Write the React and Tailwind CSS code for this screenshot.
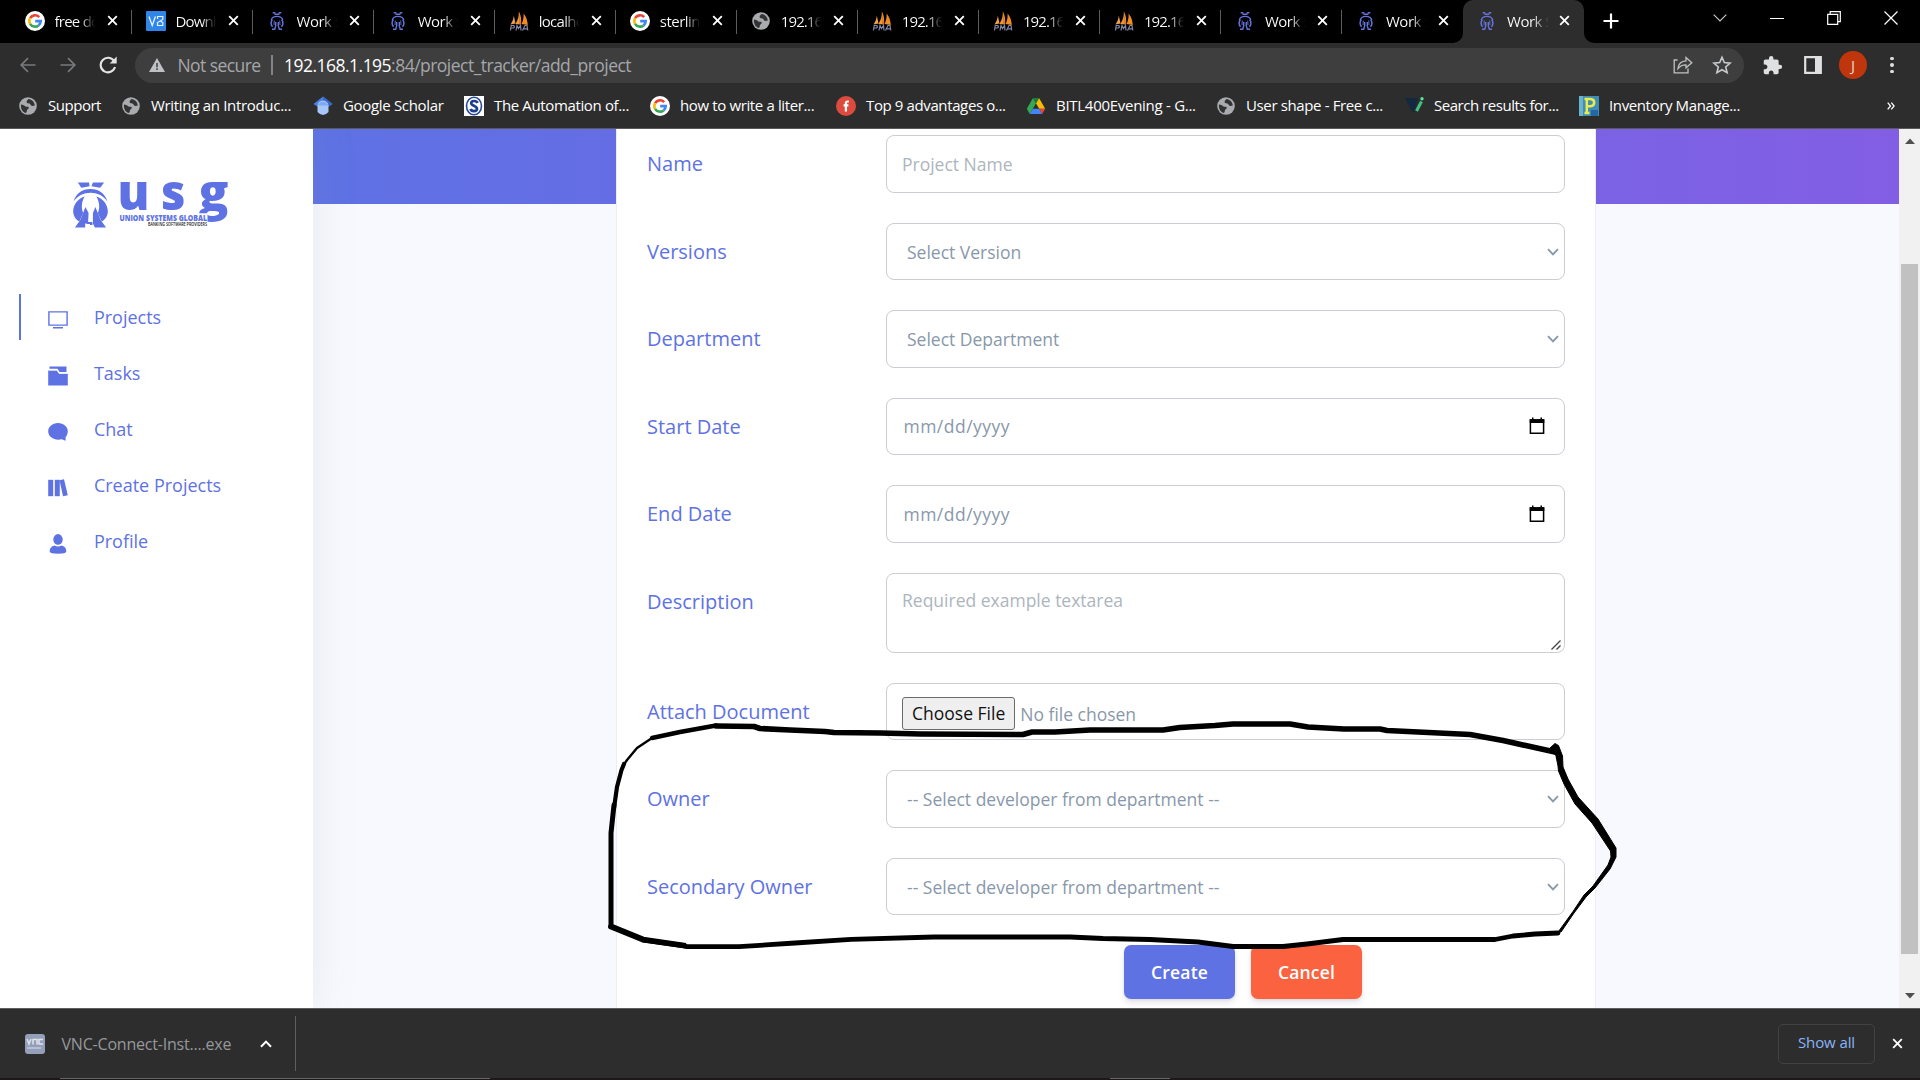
import React from "react";

/* ---------- logos and favicons ---------- */

function Figure({ className }) {
  return (
    <svg viewBox="0 0 36 46" className={className} fill="currentColor" preserveAspectRatio="none">
      <path d="M5 0.5H16.5L17 4.2L8.5 5.8Z" />
      <path d="M20.5 0.5H32L28 5.8L19 4.2Z" />
      <path d="M0.500 19.5C3 11.500 9.5 7 18 7S33 11.500 35.500 19.500C30.500 13.500 25 10.800 18 10.800S5.500 13.500 0.500 19.500Z" />
      <path d="M12 14.500C3 17 -1 26 0.500 32C1.500 35.500 3.500 38 6.500 39.500L10.500 31C8 26 9 19 12 14.500Z" />
      <path d="M24 14.500C33 17 37 26 35.500 32C34.500 35.500 32.500 38 29.500 39.500L25.500 31C28 26 27 19 24 14.500Z" />
      <path d="M12.800 25L16 31L15.500 41.500H12.500V45.500H2L7.500 38Z" />
      <path d="M23 25L20.500 31V41.500L22.500 45.500H34L28.500 38Z" />
      <path d="M14 40H20V43H17.500V42H14Z" />
    </svg>
  );
}

function WorkIcon() {
  return (
    <svg viewBox="0 0 20 20" className="size-5 shrink-0" fill="none" stroke="#6474dd">
      <path d="M5.700 1.700H8.300M11.700 1.700H14.300M7.500 3.300H12.500" strokeWidth="1.400" />
      <path d="M4.200 9C5 6.500 7.200 5.300 10 5.300S15 6.500 15.800 9" strokeWidth="1.300" />
      <path d="M5.300 8.500C3.500 11 3.800 14.200 5.600 15.600M14.700 8.500C16.500 11 16.200 14.200 14.400 15.600" strokeWidth="1.500" />
      <path d="M8.700 11V15L7.700 18.200H5M11.300 11V15L12.300 18.200H15" strokeWidth="1.400" />
      <path d="M7.300 9.500L7 14M12.700 9.500L13 14" strokeWidth="0.900" />
    </svg>
  );
}

function GoogleIcon() {
  return (
    <svg viewBox="0 0 20 20" className="size-5 shrink-0">
      <circle cx="10" cy="10" r="10" fill="#fff" />
      <g fill="none" strokeWidth="2.600">
        <path d="M14.200 6.100A5.700 5.700 0 0 0 5.100 7.200" stroke="#ea4335" />
        <path d="M5.100 7.200A5.700 5.700 0 0 0 5.100 12.800" stroke="#fbbc05" />
        <path d="M5.100 12.800A5.700 5.700 0 0 0 13.600 14.400" stroke="#34a853" />
        <path d="M13.600 14.400A5.700 5.700 0 0 0 15.700 10.100H10.200" stroke="#4285f4" />
      </g>
    </svg>
  );
}

function DownloadSiteIcon() {
  return (
    <svg viewBox="0 0 20 20" className="size-5 shrink-0">
      <rect width="20" height="20" rx="1" fill="#2f86e8" />
      <path d="M3 5.500L6.200 14.500L9.400 5.500" fill="none" stroke="#e6f1ff" strokeWidth="1.300" />
      <path d="M11.500 8V5.500H16.800V8.500L11.500 11.500V14.500H16.800V11.500L14.500 10" fill="none" stroke="#e6f1ff" strokeWidth="1.200" />
    </svg>
  );
}

function PmaIcon() {
  return (
    <svg viewBox="0 0 20 20" className="size-5 shrink-0">
      <path d="M1.500 13.500C3.500 10.500 4.500 8 4.800 4.500L6.500 12.500Z" fill="#f0a04a" />
      <path d="M6.300 13C9 9 10 5 9.900 0.500C12 4.500 12.600 9 12 13.500Z" fill="#f5962c" />
      <path d="M9.900 0.500L10.300 13H12Z" fill="#c9772a" />
      <path d="M12.500 13C14.500 9 14.800 6 14.600 2.500C17.500 6 18.500 10 18.800 14Z" fill="#f28c1e" />
      <g fill="none" stroke="#8488a8" strokeWidth="1.200">
        <path d="M1.500 19.500L2.200 14.500H4.500Q6.300 15.800 4.500 17H2" />
        <path d="M7 19.500L8 14.500L9.500 17.500L11.500 14.500L12 19.500" />
        <path d="M13.500 19.500L16 14.500H18L18.800 19.500M14.500 17.800H18.200" />
      </g>
    </svg>
  );
}

function GlobeIcon() {
  return (
    <svg viewBox="0 0 20 20" className="size-5 shrink-0">
      <circle cx="10" cy="10" r="8.800" fill="#a9abae" />
      <path d="M3 8.500C5 8.500 6.500 9.500 7.500 10.500C9 11 10.500 10 10.800 11.500C11 13 8.500 13.500 8.800 15C8.800 16 8 17 7.500 17C4.500 16 2.500 12.500 3 8.500Z" fill="#333" />
      <path d="M10.500 3C9 4.500 8 5.500 9 7C10.500 7.500 12 7 12.500 8.500C12.800 10 14.500 10.200 16.800 9.500C16.500 6 13.800 3.300 10.500 3Z" fill="#333" />
    </svg>
  );
}

function ScholarIcon() {
  return (
    <svg viewBox="0 0 20 20" className="size-5 shrink-0">
      <path d="M10 0.500L19.500 8L10 14L0.500 8Z" fill="#4c80e0" />
      <path d="M10 0.500L19.500 8L10 14Z" fill="#3969c7" />
      <path d="M4.500 10A5.500 5.500 0 0 1 15.500 10V16Q10 22 4.500 16Z" fill="#a8c6fa" />
      <path d="M4.800 9.500A5.500 5.500 0 0 1 15.200 9.500Z" fill="#7fa9f2" />
    </svg>
  );
}

function AutomationIcon() {
  return (
    <svg viewBox="0 0 20 20" className="size-5 shrink-0">
      <rect width="20" height="20" fill="#fff" />
      <ellipse cx="10" cy="10" rx="7.500" ry="8.800" fill="none" stroke="#274a94" strokeWidth="1.600" />
      <path d="M13.500 7C12.500 4.300 7.200 4.300 7.200 7.300C7.200 10 13 9.500 13 12.700C13 15.900 7.300 15.700 6.500 13" fill="none" stroke="#1f3f8c" strokeWidth="2.700" />
    </svg>
  );
}

function RedFIcon() {
  return (
    <svg viewBox="0 0 20 20" className="size-5 shrink-0">
      <circle cx="10" cy="10" r="10" fill="#dd4b3f" />
      <path d="M12.800 5.500H11.600Q9.900 5.500 9.900 7.300V15.500M7.600 9.300H12.400" fill="none" stroke="#fff" strokeWidth="2.200" />
    </svg>
  );
}

function DriveIcon() {
  return (
    <svg viewBox="0 0 20 20" className="size-5 shrink-0">
      <path d="M7 2L10 7.200L3.800 18L0.800 12.800Z" fill="#34a853" />
      <path d="M10 7.200L13 2L19.200 12.800H13.200Z" fill="#fbbc05" />
      <path d="M7 2H13L10 7.200Z" fill="#188038" />
      <path d="M6.800 12.800H13.200L16.200 18H3.800Z" fill="#4285f4" />
      <path d="M13.200 12.800H19.200L16.200 18Z" fill="#ea4335" />
    </svg>
  );
}

function SearchResultsIcon() {
  return (
    <svg viewBox="0 0 20 20" className="size-5 shrink-0">
      <path d="M0.500 2H14L9.500 17.500Z" fill="#14283f" />
      <path d="M17.500 5.500L12.500 15" stroke="#3fc27d" strokeWidth="3" />
      <circle cx="18" cy="2.700" r="1.700" fill="#56e39a" />
    </svg>
  );
}

function InventoryIcon() {
  return (
    <svg viewBox="0 0 20 20" className="size-5 shrink-0">
      <rect width="20" height="20" fill="#3f8db5" />
      <path d="M0 0H4V20H0Z" fill="#69b3cf" />
      <path d="M12 14H19V20H12Z" fill="#2566a4" />
      <path d="M7.800 17V3H11.500Q15.200 3.200 15.200 6.500T11.500 10.200H8M5.500 3H9M5.500 17H10.500" fill="none" stroke="#e9ec4e" strokeWidth="2.500" />
    </svg>
  );
}

function CloseX({ className }) {
  return (
    <svg viewBox="0 0 12 12" className={className} stroke="#fff" strokeWidth="2">
      <path d="M1.300 1.300L10.700 10.700M10.700 1.300L1.300 10.700" />
    </svg>
  );
}

/* ---------- browser chrome ---------- */

const tabs = [
  { icon: GoogleIcon, title: "free do", cls: "tracking-[-0.750px]" },
  { icon: DownloadSiteIcon, title: "Downl", cls: "tracking-[-0.900px]" },
  { icon: WorkIcon, title: "Work S", cls: "tracking-[-0.500px]" },
  { icon: WorkIcon, title: "Work S", cls: "tracking-[-0.500px]" },
  { icon: PmaIcon, title: "localho", cls: "tracking-[-0.700px]" },
  { icon: GoogleIcon, title: "sterlin", cls: "tracking-[-0.500px]" },
  { icon: GlobeIcon, title: "192.16", cls: "tracking-[-0.900px]" },
  { icon: PmaIcon, title: "192.16", cls: "tracking-[-0.900px]" },
  { icon: PmaIcon, title: "192.16", cls: "tracking-[-0.900px]" },
  { icon: PmaIcon, title: "192.16", cls: "tracking-[-0.900px]" },
  { icon: WorkIcon, title: "Work S", cls: "tracking-[-0.500px]" },
  { icon: WorkIcon, title: "Work S", cls: "tracking-[-0.500px]" },
];

function TabBody({ icon: Icon, title, cls, fade }) {
  return (
    <>
      <Icon />
      <div className="ml-[10px] w-[42px] shrink-0">
        <span className={"inline-block whitespace-nowrap bg-gradient-to-r from-white from-[26px] to-[42px] bg-clip-text text-[15px] leading-5 text-transparent " + cls + " " + fade}>
          {title}
        </span>
      </div>
      <CloseX className="ml-[10px] size-[11px] shrink-0" />
    </>
  );
}

function TabStrip() {
  return (
    <div className="flex h-[43px] bg-black pl-[10.500px]">
      {tabs.map((t, i) => (
        <div key={i} className="relative flex w-[121.050px] shrink-0 items-center pb-[2px] pl-[14px]">
          <TabBody {...t} fade="to-black" />
          {i < 11 && <div className="absolute right-0 top-[10px] h-[24px] w-px bg-[#5c5c5c]" />}
        </div>
      ))}
      <div className="relative flex w-[121px] shrink-0 items-center rounded-t-[10px] bg-[#2d2d2d] pb-[2px] pl-[14px]">
        <TabBody icon={WorkIcon} title="Work S" cls="tracking-[-0.500px]" fade="to-[#2d2d2d]" />
        <svg viewBox="0 0 10 10" className="absolute bottom-0 left-[-10px] size-[10px]" fill="#2d2d2d">
          <path d="M10 0V10H0A10 10 0 0 0 10 0Z" />
        </svg>
        <svg viewBox="0 0 10 10" className="absolute bottom-0 right-[-10px] size-[10px]" fill="#2d2d2d">
          <path d="M0 0V10H10A10 10 0 0 1 0 0Z" />
        </svg>
      </div>
      <div className="flex flex-1 items-start pt-[11px] pl-[19px]">
        <svg viewBox="0 0 16 16" className="mt-[2px] size-4" stroke="#fff" strokeWidth="2.200">
          <path d="M8 0.500V15.500M0.500 8H15.500" />
        </svg>
        <div className="ml-auto flex items-center pr-[22px]">
          <svg viewBox="0 0 14 8" className="h-2 w-[14px]" fill="none" stroke="#ccc" strokeWidth="1.100">
            <path d="M0.700 0.700L7 7L13.300 0.700" />
          </svg>
          <div className="ml-[43px] h-px w-[14px] bg-white" />
          <svg viewBox="0 0 14 14" className="ml-[43px] size-[14px]" fill="none" stroke="#fff" strokeWidth="1.200">
            <path d="M0.700 3.300H10.700V13.300H0.700ZM3.200 3.300V0.700H13.300V10.700H10.700" />
          </svg>
          <svg viewBox="0 0 14 14" className="ml-[43px] size-[14px]" stroke="#fff" strokeWidth="1.200">
            <path d="M0.500 0.500L13.500 13.500M13.500 0.500L0.500 13.500" />
          </svg>
        </div>
      </div>
    </div>
  );
}

function Toolbar() {
  return (
    <div className="flex h-[44px] items-center bg-[#2d2d2d]">
      <svg viewBox="0 0 16 16" className="ml-[19.500px] size-4" fill="none" stroke="#77797c" strokeWidth="1.700">
        <path d="M15.500 8H1.500M8 1.200L1.200 8L8 14.800" />
      </svg>
      <svg viewBox="0 0 16 16" className="ml-6 size-4" fill="none" stroke="#77797c" strokeWidth="1.700">
        <path d="M0.500 8H14.500M8 1.200L14.800 8L8 14.800" />
      </svg>
      <svg viewBox="0 0 18 18" className="ml-[23px] size-[18px]" fill="none" stroke="#e4e4e4" strokeWidth="2.100">
        <path d="M15.200 5.200A7.300 7.300 0 1 0 16 11" />
        <path d="M17.700 0.500V7.500H10.700Z" fill="#e4e4e4" stroke="none" />
      </svg>
      <div className="ml-[18.500px] flex h-[35px] w-[1609px] items-center rounded-full bg-[#3e3e3e] text-[17.500px] text-[#a5a7aa]">
        <svg viewBox="0 0 16 14" className="ml-[14px] h-[14px] w-4">
          <path d="M8 0L16 14H0Z" fill="#bfc1c4" />
          <path d="M8 5V9.200M8 10.300V12" stroke="#3e3e3e" strokeWidth="1.500" />
        </svg>
        <span className="ml-[12.500px] w-[84px] whitespace-nowrap tracking-[-0.570px]">Not secure</span>
        <div className="ml-[9px] h-[20px] w-[2px] bg-[#808285]" />
        <span className="ml-[11.500px] whitespace-nowrap tracking-[-0.520px]">
          <span className="text-white">192.168.1.195</span>:84/project_tracker/add_project
        </span>
        <svg viewBox="0 0 20 18" className="ml-auto h-[18px] w-5" fill="none" stroke="#bfc1c4" strokeWidth="1.300">
          <path d="M4.500 4H1.200V16.800H15V12.500" />
          <path d="M5 12.500C5.500 7.500 8.500 5 13 4.800V1.500L18.800 6.700L13 11.800V8.800C9.500 8.800 7 10 5 12.500Z" />
        </svg>
        <svg viewBox="0 0 20 20" className="ml-[19px] mr-[12px] size-5" fill="none" stroke="#c8cacc" strokeWidth="1.600">
          <path d="M10 2.200L12.300 7.600L18.200 8.100L13.700 12L15.100 17.700L10 14.700L4.900 17.700L6.300 12L1.800 8.100L7.700 7.600Z" />
        </svg>
      </div>
      <svg viewBox="0 0 24 24" className="ml-[18px] size-[21px]" fill="#dfe0e1">
        <path d="M20.500 11H19V7c0-1.100-.9-2-2-2h-4V3.500a2.500 2.500 0 0 0-5 0V5H4c-1.100 0-2 .9-2 2v3.800h1.500c1.500 0 2.700 1.200 2.700 2.700S5 16.200 3.500 16.200H2V20c0 1.100.9 2 2 2h3.800v-1.500c0-1.500 1.200-2.700 2.700-2.700s2.700 1.200 2.700 2.700V22H17c1.100 0 2-.9 2-2v-4h1.500a2.500 2.500 0 0 0 0-5z" />
      </svg>
      <svg viewBox="0 0 18 18" className="ml-[20.500px] size-[18px]" fill="none">
        <path d="M1.200 1.200H16.800V16.800H1.200Z" stroke="#dfe0e1" strokeWidth="2.200" />
        <path d="M11 1H17V17H11Z" fill="#dfe0e1" />
      </svg>
      <div className="ml-[17.500px] flex size-7 items-center justify-center rounded-full bg-[#bf360c] text-[15px] text-[#e8d6cf]">J</div>
      <div className="ml-[23px] flex w-[4px] flex-col gap-[3px]">
        <div className="size-[3.500px] rounded-full bg-[#dfe0e1]" />
        <div className="size-[3.500px] rounded-full bg-[#dfe0e1]" />
        <div className="size-[3.500px] rounded-full bg-[#dfe0e1]" />
      </div>
    </div>
  );
}

const bookmarks = [
  { icon: GlobeIcon, title: "Support", cls: "w-[103px] tracking-[-0.470px]" },
  { icon: GlobeIcon, title: "Writing an Introduc...", cls: "w-[192px] tracking-[-0.310px]" },
  { icon: ScholarIcon, title: "Google Scholar", cls: "w-[151px] tracking-[-0.320px]" },
  { icon: AutomationIcon, title: "The Automation of...", cls: "w-[186px] tracking-[-0.360px]" },
  { icon: GoogleIcon, title: "how to write a liter...", cls: "w-[186px] tracking-[-0.370px]" },
  { icon: RedFIcon, title: "Top 9 advantages o...", cls: "w-[190px] tracking-[-0.380px]" },
  { icon: DriveIcon, title: "BITL400Evening - G...", cls: "w-[190px] tracking-[-0.280px]" },
  { icon: GlobeIcon, title: "User shape - Free c...", cls: "w-[188px] tracking-[-0.370px]" },
  { icon: SearchResultsIcon, title: "Search results for...", cls: "w-[175px] tracking-[-0.470px]" },
  { icon: InventoryIcon, title: "Inventory Manage...", cls: "w-[180px] tracking-[-0.380px]" },
];

function BookmarksBar() {
  return (
    <div className="flex h-[42px] items-center border-b border-[#5a5a5a] bg-[#2d2d2d] pb-[4px] pl-[18px] text-[15px] text-white">
      {bookmarks.map(({ icon: Icon, title, cls }) => (
        <div key={title} className={"flex shrink-0 items-center gap-[10px] whitespace-nowrap " + cls}>
          <Icon />
          {title}
        </div>
      ))}
      <svg viewBox="0 0 8 8" className="ml-auto mr-[25px] size-2" fill="none" stroke="#fff" strokeWidth="1.300">
        <path d="M0.700 0.700L3.500 4L0.700 7.300M4.300 0.700L7.100 4L4.300 7.300" />
      </svg>
    </div>
  );
}

/* ---------- page ---------- */

const navItems = [
  {
    label: "Projects",
    active: true,
    icon: (
      <>
        <path d="M0.900 1.900H19.100V15.100H0.900Z" fill="none" stroke="currentColor" strokeWidth="1.400" />
        <path d="M5 17H15V18.500H5Z" />
      </>
    ),
  },
  {
    label: "Tasks",
    icon: (
      <>
        <path d="M1.500 0.500H18.500V6H11.500L9.500 2.800H1.500Z" />
        <path d="M0.200 4.500H8.700L11 7.800H19.800V19.500H0.200Z" />
        <path d="M1 3.900H9.300L11.500 7H19" fill="none" stroke="#fff" strokeWidth="0.900" />
      </>
    ),
  },
  {
    label: "Chat",
    icon: <path d="M10 1C15.500 1 19.800 4.700 19.800 9.300C19.800 11.800 18.800 13.800 17.600 15V18.700L13.800 17.200C7 18.900 0.200 15.500 0.200 9.300C0.200 4.700 4.500 1 10 1Z" />,
  },
  {
    label: "Create Projects",
    icon: (
      <>
        <path d="M0.200 1.800H5.200V18.200H0.200Z" />
        <path d="M6.800 1.800H11.800V18.200H6.800Z" />
        <path d="M11.500 2.200L16 1.300L19.800 17.200L15 18.300Z" />
      </>
    ),
  },
  {
    label: "Profile",
    icon: (
      <>
        <ellipse cx="10" cy="5.400" rx="4.700" ry="5.300" />
        <path d="M6.500 11.500Q10 13.600 13.500 11.500C17.500 12.500 18.300 15 18.300 17.800Q18 19.700 10 19.700T1.700 17.800C1.700 15 2.500 12.500 6.500 11.500Z" />
      </>
    ),
  },
];

function Sidebar() {
  return (
    <aside className="relative z-10 w-[313px] shrink-0 bg-white text-[#5e72e4] shadow-[0_0_40px_0_rgba(136,152,170,0.170)]">
      <div className="flex h-[148px] pt-[53px] pl-[73px]">
        <Figure className="h-[46px] w-[35px]" />
        <svg viewBox="0 0 110 46" className="ml-[11px] h-[46px] w-[110px]" fill="#5e72e4" fontFamily="'Open Sans', sans-serif">
          <g fontSize="49" fontWeight="800">
            <text x="-1.500" y="27.500" textLength="32" lengthAdjust="spacingAndGlyphs">u</text>
            <text x="42" y="27.500" textLength="24.500" lengthAdjust="spacingAndGlyphs">s</text>
            <text x="79.500" y="27.500" textLength="30" lengthAdjust="spacingAndGlyphs">g</text>
          </g>
          <path d="M0 31.300H88.500V46H0Z" fill="#fff" />
          <text x="0.500" y="38.500" fontSize="9.200" fontWeight="800" textLength="87.500" lengthAdjust="spacingAndGlyphs">UNION SYSTEMS GLOBAL</text>
          <text x="29" y="43.500" fontSize="4.600" fontWeight="600" fill="#111" textLength="59" lengthAdjust="spacingAndGlyphs">BANKING SOFTWARE PROVIDERS</text>
        </svg>
      </div>
      <nav className="mt-[12px]">
        {navItems.map((n) => (
          <div key={n.label} className="flex h-14 items-center pl-[19px]">
            <div className={n.active ? "h-[46px] w-[2px] bg-[#5e72e4]" : "h-[46px] w-[2px]"} />
            <svg viewBox="0 0 20 20" className="ml-[27.300px] mt-[5px] size-5" fill="currentColor">
              {n.icon}
            </svg>
            <span className="ml-[25.600px] text-[18px]">{n.label}</span>
          </div>
        ))}
      </nav>
    </aside>
  );
}

function Chevron() {
  return (
    <svg viewBox="0 0 12 8" className="ml-auto mr-[5px] h-2 w-3" fill="none" stroke="#8898aa" strokeWidth="1.900">
      <path d="M1 1.200L6 6.300L11 1.200" />
    </svg>
  );
}

function CalendarIcon() {
  return (
    <svg viewBox="0 0 16 18" className="ml-auto mr-[19.500px] h-[18px] w-4">
      <path d="M1.400 3H14.600V16.300H1.400Z" fill="none" stroke="#000" strokeWidth="1.500" />
      <path d="M0.700 2.300H15.300V6H0.700ZM3 0.500H4.500V3H3ZM11.500 0.500H13V3H11.500Z" />
    </svg>
  );
}

function Row({ label, children }) {
  return (
    <div className="flex">
      <label className="w-[239px] shrink-0 pt-[14px] text-[20px] leading-[30px] text-[#5e72e4]">{label}</label>
      {children}
    </div>
  );
}

function Box({ pad, children }) {
  return (
    <div className={"flex h-[57.500px] w-[679px] items-center rounded-lg border border-[#cacdd2] text-[17.500px] text-[#8898aa] " + pad}>
      {children}
    </div>
  );
}

function SelectBox({ text }) {
  return (
    <Box pad="pl-5 pt-px">
      {text}
      <Chevron />
    </Box>
  );
}

function DateBox() {
  return (
    <Box pad="pl-[16.500px]">
      <span className="tracking-[0.480px]">mm/dd/yyyy</span>
      <CalendarIcon />
    </Box>
  );
}

function ProjectForm() {
  return (
    <div className="flex w-[980px] shrink-0 flex-col gap-[30px] border-x border-[#eceef4] bg-white pl-[30px] pt-[6px]">
      <Row label="Name">
        <input
          placeholder="Project Name"
          className="h-[57.500px] w-[679px] rounded-lg border border-[#cacdd2] pl-[15px] text-[17.500px] placeholder:text-[#adb5bd]"
        />
      </Row>
      <Row label="Versions"><SelectBox text="Select Version" /></Row>
      <Row label="Department"><SelectBox text="Select Department" /></Row>
      <Row label="Start Date"><DateBox /></Row>
      <Row label="End Date"><DateBox /></Row>
      <Row label="Description">
        <div className="relative h-20">
          <textarea
            placeholder="Required example textarea"
            className="h-20 w-[679px] resize-none rounded-lg border border-[#cacdd2] px-[15px] pt-[13px] text-[17.500px] leading-[26px] placeholder:text-[#adb5bd]"
          />
          <svg viewBox="0 0 12 12" className="absolute bottom-[2px] right-[3px] size-3" stroke="#444" strokeWidth="1.400">
            <path d="M1.500 10.500L10.500 1.500M6.500 10.500L10.500 6.500" />
          </svg>
        </div>
      </Row>
      <Row label="Attach Document">
        <Box pad="pl-[15px] pt-[4px]">
          <span className="rounded-[3px] border border-[#6b6b6b] bg-[#efefef] px-[9px] leading-[31px] text-[#111]">Choose File</span>
          <span className="ml-[5px] mt-[1px]">No file chosen</span>
        </Box>
      </Row>
      <Row label="Owner"><SelectBox text="-- Select developer from department --" /></Row>
      <Row label="Secondary Owner"><SelectBox text="-- Select developer from department --" /></Row>
      <div className="flex gap-4 pl-[477px] text-[17.500px] font-semibold text-white">
        <button className="h-[54px] w-[111px] rounded-[7px] bg-[#5e72e4] tracking-[0.200px] shadow-[0_4px_6px_rgba(50,50,93,0.110),0_1px_3px_rgba(0,0,0,0.080)]">Create</button>
        <button className="h-[54px] w-[111px] rounded-[7px] bg-[#fb6340] tracking-[0.200px] shadow-[0_4px_6px_rgba(50,50,93,0.110),0_1px_3px_rgba(0,0,0,0.080)]">Cancel</button>
      </div>
    </div>
  );
}

function Scrollbar() {
  return (
    <div className="flex w-[21px] shrink-0 flex-col items-center bg-[#f1f1f1] py-[9px]">
      <svg viewBox="0 0 10 6" className="h-[6px] w-[10px]" fill="#505050"><path d="M5 0.500L10 6H0Z" /></svg>
      <div className="mt-[120px] h-[690px] w-[17px] bg-[#c1c1c1]" />
      <svg viewBox="0 0 10 6" className="mt-auto h-[6px] w-[10px]" fill="#505050"><path d="M0 0H10L5 5.500Z" /></svg>
    </div>
  );
}

/* Hand-drawn loop around the owner fields */
function Marker() {
  return (
    <svg viewBox="0 0 1920 1080" className="pointer-events-none absolute inset-0 z-20 size-full" fill="none" stroke="#000" strokeLinejoin="round" strokeLinecap="round">
      <path strokeWidth="5.600" d="M716 726L754 726.500L760 728.500L790 730L825 731.500L834 732.500L880 733L921 734L1023 734.500L1032 732L1055 732L1090 730L1163 730L1180 727.500L1215 725.500L1233 724L1290 724L1308 727L1344 729H1380L1387 730.500L1470 734.500L1503 740.500L1523 745L1555 752" />
      <path fill="#000" strokeWidth="1" d="M1550 748L1555 743.500L1558.500 745.500L1562.500 756L1563 767L1568 779L1578 797L1598 819L1616 848L1616 857L1610 869L1595 888L1586 897L1574 913L1561 932L1558.500 931.500L1573 911.500L1584 895L1593 886L1608 865L1611 857L1610.500 851L1592 823L1575 804L1564 784L1558.500 771L1558 766L1556 756Z" />
      <path strokeWidth="4.800" d="M1558 933L1535 934L1513 936L1495 939.500H1343L1307 944L1283 946.500H1233L1198 942L1150 939.500L1103 938.500L1070 937H934L851 939.300L795 943L739 946.700H687L682 945.500L643 940" />
      <path strokeWidth="5.800" d="M684 945.500L643 939.500L611 926.500" />
      <path strokeWidth="5" d="M611 926V833L614 805" />
      <path strokeWidth="4.200" d="M614 808L617 787L621.500 770L624 764" />
      <path strokeWidth="2.400" d="M623 766L627 760L637 748L652 738" />
      <path strokeWidth="4.400" d="M652 738L680 732L716 725.500" />
    </svg>
  );
}

function DownloadBar() {
  return (
    <div className="flex h-[70px] items-center border-t border-[#5f5f5f] bg-[#2d2d2d] text-white">
      <svg viewBox="0 0 20 20" className="ml-[25px] size-5">
        <rect width="20" height="20" rx="3" fill="#94a0b8" />
        <path d="M2 5L4 10L6 5M8 10.500V5.500H12V10.500M18 5.500H14V10H18" fill="none" stroke="#dfe4ec" strokeWidth="1.500" />
        <path d="M2 14H16" stroke="#b7c0d0" strokeWidth="2" />
      </svg>
      <span className="ml-[16.500px] w-[170px] whitespace-nowrap pt-px text-[16px] tracking-[-0.200px] text-[#96989b]">VNC-Connect-Inst....exe</span>
      <svg viewBox="0 0 12 8" className="ml-[28.800px] h-2 w-3" fill="none" stroke="#fff" strokeWidth="2"><path d="M1 6.800L6 1.600L11 6.800" /></svg>
      <div className="ml-[23px] h-[55px] w-px bg-[#5f5f5f]" />
      <div className="ml-auto flex h-[40px] w-[97px] items-center justify-center rounded-[5px] border border-[#404245] pb-[2px] text-[15px] tracking-[-0.100px] text-[#8ab4f8]">Show all</div>
      <CloseX className="ml-[17px] mr-[17px] size-[11px]" />
    </div>
  );
}

export default function App() {
  return (
    <div className="relative flex h-[1080px] w-[1920px] flex-col overflow-hidden bg-white font-['Open_Sans',sans-serif]">
      <TabStrip />
      <Toolbar />
      <BookmarksBar />
      <div className="flex h-[879px] shrink-0 overflow-hidden">
        <Sidebar />
        <main className="flex w-[1586px] justify-center bg-[#f8f9fe]">
          <div className="h-[75px] flex-1 bg-gradient-to-r from-[#5e72e4] to-[#656de4]" />
          <ProjectForm />
          <div className="h-[75px] flex-1 bg-gradient-to-r from-[#7b62e4] to-[#825ee4]" />
        </main>
        <Scrollbar />
      </div>
      <DownloadBar />
      <div className="flex h-[2px] bg-[#1d1818]">
        <div className="ml-[60px] h-px w-[430px] bg-[#666]" />
        <div className="ml-[620px] h-px w-[60px] bg-[#666]" />
      </div>
      <Marker />
    </div>
  );
}
